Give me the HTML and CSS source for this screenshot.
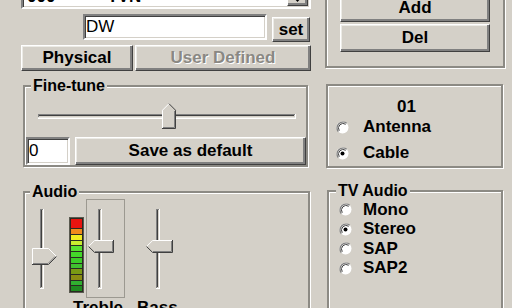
FILE: index.html
```html
<!DOCTYPE html>
<html>
<head>
<meta charset="utf-8">
<link rel="stylesheet" href="styles.css">
</head>
<body>
<div class="dialog">
  <div class="col-left">
    <div class="combo">
      <span class="combo-num">000</span><span class="combo-name">TVN</span>
      <span class="combo-btn"><svg width="9" height="5" viewBox="0 0 9 5"><path d="M0 0H9L4.5 5Z" fill="#000"/></svg></span>
    </div>
    <div class="edit-row">
      <div class="edit edit-name">DW</div>
      <div class="btn btn-set">set</div>
    </div>
    <div class="btn-row">
      <div class="btn btn-phys">Physical</div>
      <div class="btn btn-user disabled">User Defined</div>
    </div>
    <fieldset class="group group-fine">
      <legend class="legend-fine">Fine-tune</legend>
      <svg class="hslider" width="281" height="26" viewBox="0 0 281 26">
        <rect x="13" y="11" width="257" height="4" fill="#d4d0c8"/>
        <path d="M13 11.5H270" stroke="#808080"/>
        <path d="M13.5 11V15" stroke="#808080"/>
        <path d="M14 12.5H269" stroke="#404040"/>
        <path d="M13 14.5H270" stroke="#e8e6e0"/>
        <path d="M13 15.5H271M270.5 11V16" stroke="#fff"/>
        <path d="M137 7L144 0L151 7V25H137Z" fill="#d4d0c8"/>
        <path d="M137.5 25V7.2L144 0.7" stroke="#fff" fill="none"/>
        <path d="M144 0.7L150.5 7.2V25.5H137" stroke="#404040" fill="none"/>
        <path d="M149.5 8V24.5H138" stroke="#808080" fill="none"/>
      </svg>
      <div class="fine-row">
        <div class="edit edit-fine">0</div>
        <div class="btn btn-save">Save as default</div>
      </div>
    </fieldset>
    <fieldset class="group group-audio">
      <legend class="legend-audio">Audio</legend>
      <div class="audio-row">
        <svg class="vol" width="28" height="83" viewBox="0 0 28 83">
          <rect x="10" y="2" width="4" height="79" fill="#d4d0c8"/>
          <path d="M10.5 2V81M10 2.5H14" stroke="#808080"/>
          <path d="M11.5 3V80" stroke="#404040"/>
          <path d="M13.5 2V81M10 81.5H14" stroke="#fff"/>
          <path d="M2 41H18.5L27 49.5L18.5 58H2Z" fill="#d4d0c8"/>
          <path d="M2.5 58V41.5H18.5L26.5 49.5" stroke="#fff" fill="none"/>
          <path d="M26.5 49.5L18.5 57.5H2" stroke="#404040" fill="none"/>
          <path d="M25 49.5L18 56.5H3" stroke="#808080" fill="none"/>
        </svg>
        <div class="meter">
          <span class="seg tall" style="background:#e81410"></span>
          <span class="seg" style="background:#f08a1c"></span>
          <span class="seg" style="background:#f0ec20"></span>
          <span class="seg" style="background:#c8ec30"></span>
          <span class="seg" style="background:#58e030"></span>
          <span class="seg" style="background:#44d82a"></span>
          <span class="seg" style="background:#3ccc28"></span>
          <span class="seg" style="background:#40c030"></span>
          <span class="seg" style="background:#7a9a14"></span>
          <span class="seg" style="background:#8a8c12"></span>
          <span class="seg" style="background:#30b030"></span>
          <span class="seg" style="background:#1f8a20"></span>
        </div>
        <div class="focus">
          <svg width="37" height="97" viewBox="1 1 37 97">
            <rect x="12" y="10" width="4" height="79" fill="#d4d0c8"/>
            <path d="M12.5 10V89M12 10.5H16" stroke="#808080"/>
            <path d="M13.5 11V88" stroke="#404040"/>
            <path d="M15.5 10V89M12 89.5H16" stroke="#fff"/>
            <path d="M2 47.5L8.5 41H28V54H8.5Z" fill="#d4d0c8"/>
            <path d="M28 41.5H8.7L2.5 47.5" stroke="#fff" fill="none"/>
            <path d="M2.5 47.5L8.7 53.5H27.5V41" stroke="#404040" fill="none"/>
            <path d="M26.5 42V52.5H9" stroke="#808080" fill="none"/>
          </svg>
        </div>
        <svg class="bass" width="32" height="99" viewBox="0 0 32 99">
          <rect x="12" y="10" width="4" height="79" fill="#d4d0c8"/>
          <path d="M12.5 10V89M12 10.5H16" stroke="#808080"/>
          <path d="M13.5 11V88" stroke="#404040"/>
          <path d="M15.5 10V89M12 89.5H16" stroke="#fff"/>
          <path d="M2 47.5L8.5 41H29V54H8.5Z" fill="#d4d0c8"/>
          <path d="M29 41.5H8.7L2.5 47.5" stroke="#fff" fill="none"/>
          <path d="M2.5 47.5L8.7 53.5H28.5V41" stroke="#404040" fill="none"/>
          <path d="M27.5 42V52.5H9" stroke="#808080" fill="none"/>
        </svg>
      </div>
      <div class="audio-labels"><span class="lbl-treble">Treble</span><span class="lbl-bass">Bass</span></div>
    </fieldset>
  </div>
  <div class="col-right">
    <div class="group group-buttons">
      <div class="btn btn-add">Add</div>
      <div class="btn btn-del">Del</div>
    </div>
    <div class="group group-source">
      <div class="src-num">01</div>
      <div class="radio radio-src"><svg class="rb" width="13" height="13" viewBox="0 0 13 13"><circle cx="6.5" cy="6.5" r="6" fill="#fff"/><path d="M2.3 10.7A6 6 0 0 1 10.7 2.3" fill="none" stroke="#808080" stroke-width="1.4"/><path d="M3.3 9.7A4.6 4.6 0 0 1 9.7 3.3" fill="none" stroke="#404040" stroke-width="1"/></svg>Antenna</div>
      <div class="radio radio-src radio-gap"><svg class="rb" width="13" height="13" viewBox="0 0 13 13"><circle cx="6.5" cy="6.5" r="6" fill="#fff"/><path d="M2.3 10.7A6 6 0 0 1 10.7 2.3" fill="none" stroke="#808080" stroke-width="1.4"/><path d="M3.3 9.7A4.6 4.6 0 0 1 9.7 3.3" fill="none" stroke="#404040" stroke-width="1"/><circle cx="6.5" cy="6.5" r="2" fill="#000"/></svg>Cable</div>
    </div>
    <fieldset class="group group-tv">
      <legend class="legend-tv">TV Audio</legend>
      <div class="radio radio-tv"><svg class="rb" width="13" height="13" viewBox="0 0 13 13"><circle cx="6.5" cy="6.5" r="6" fill="#fff"/><path d="M2.3 10.7A6 6 0 0 1 10.7 2.3" fill="none" stroke="#808080" stroke-width="1.4"/><path d="M3.3 9.7A4.6 4.6 0 0 1 9.7 3.3" fill="none" stroke="#404040" stroke-width="1"/></svg>Mono</div>
      <div class="radio radio-tv"><svg class="rb" width="13" height="13" viewBox="0 0 13 13"><circle cx="6.5" cy="6.5" r="6" fill="#fff"/><path d="M2.3 10.7A6 6 0 0 1 10.7 2.3" fill="none" stroke="#808080" stroke-width="1.4"/><path d="M3.3 9.7A4.6 4.6 0 0 1 9.7 3.3" fill="none" stroke="#404040" stroke-width="1"/><circle cx="6.5" cy="6.5" r="2" fill="#000"/></svg>Stereo</div>
      <div class="radio radio-tv"><svg class="rb" width="13" height="13" viewBox="0 0 13 13"><circle cx="6.5" cy="6.5" r="6" fill="#fff"/><path d="M2.3 10.7A6 6 0 0 1 10.7 2.3" fill="none" stroke="#808080" stroke-width="1.4"/><path d="M3.3 9.7A4.6 4.6 0 0 1 9.7 3.3" fill="none" stroke="#404040" stroke-width="1"/></svg>SAP</div>
      <div class="radio radio-tv"><svg class="rb" width="13" height="13" viewBox="0 0 13 13"><circle cx="6.5" cy="6.5" r="6" fill="#fff"/><path d="M2.3 10.7A6 6 0 0 1 10.7 2.3" fill="none" stroke="#808080" stroke-width="1.4"/><path d="M3.3 9.7A4.6 4.6 0 0 1 9.7 3.3" fill="none" stroke="#404040" stroke-width="1"/></svg>SAP2</div>
    </fieldset>
  </div>
</div>
</body>
</html>
```
FILE: styles.css
```css
html, body {
  margin: 0;
  padding: 0;
  background: #d4d0c8;
  height: 308px;
  overflow: hidden;
}
body {
  font-family: "Liberation Sans", Arial, sans-serif;
  font-size: 17px;
  line-height: 20px;
  color: #000;
}
.dialog {
  display: flex;
  align-items: flex-start;
  padding-left: 21px;
  gap: 14px;
}
.col-left {
  width: 290px;
  display: flex;
  flex-direction: column;
  align-items: flex-start;
  margin-top: -15px;
}
.col-right {
  width: 180px;
  display: flex;
  flex-direction: column;
  align-items: flex-start;
  margin-top: -30px;
}

/* 3D controls */
.btn {
  box-sizing: border-box;
  display: flex;
  align-items: center;
  justify-content: center;
  background: #d4d0c8;
  border: 1px solid;
  border-color: #fff #404040 #404040 #fff;
  box-shadow: inset -2px -2px 0 #808080, inset 1px 1px 0 #ecebe6;
  font-weight: bold;
  font-size: 17px;
  white-space: nowrap;
}
.btn.disabled {
  color: #8a8883;
  text-shadow: 1px 1px 0 #fff;
}
.edit {
  box-sizing: border-box;
  background: #fff;
  border: 2px solid;
  border-color: #808080 #fff #fff #808080;
  box-shadow: inset 1px 1px 0 #404040, inset -1px -1px 0 #d4d0c8;
  display: flex;
  align-items: center;
  font-size: 17px;
  white-space: nowrap;
}

/* combo box */
.combo {
  box-sizing: border-box;
  width: 290px;
  height: 24px;
  background: #fff;
  border: 2px solid;
  border-color: #808080 #fff #fff #808080;
  box-shadow: inset 1px 1px 0 #404040, inset -1px -1px 0 #d4d0c8;
  display: flex;
  align-items: center;
  padding-left: 4px;
  font-weight: bold;
}
.combo-name {
  margin-left: 52px;
  flex: 1;
}
.combo-btn {
  box-sizing: border-box;
  align-self: stretch;
  width: 21px;
  margin: 1px 1px 1px 0;
  background: #d4d0c8;
  border: 1px solid;
  border-color: #fff #404040 #404040 #fff;
  box-shadow: inset -2px -2px 0 #808080;
  display: flex;
  align-items: flex-end;
  justify-content: center;
  padding-bottom: 3px;
}
.combo-btn svg { display: block; }

.edit-row {
  display: flex;
  align-items: flex-start;
  margin-top: 5px;
}
.edit-name {
  margin-left: 62px;
  width: 184px;
  height: 26px;
  padding-left: 1px;
}
.btn-set {
  margin-left: 5px;
  margin-top: 3px;
  width: 38px;
  height: 25px;
}
.btn-row {
  display: flex;
  gap: 2px;
  margin-top: 3px;
}
.btn-phys { width: 112px; height: 26px; }
.btn-user { width: 176px; height: 26px; }

/* group boxes */
.group {
  box-sizing: border-box;
  margin: 0;
  padding: 0;
  min-inline-size: 0;
  border: 2px solid #8c8a84;
  box-shadow: inset 1px 1px 0 #fff, 1px 1px 0 #fff;
}
.group legend {
  padding: 0 2px;
  font-size: 16px;
  line-height: 18px;
  font-weight: bold;
  background: #d4d0c8;
}
.legend-fine { margin-left: 6px; }
.legend-audio { margin-left: 5px; }
.legend-tv { margin-left: 7px; }

.group-fine {
  margin-top: 6px;
  margin-left: 2px;
  width: 285px;
}
.hslider {
  display: block;
  margin-top: 8px;
}
.fine-row {
  display: flex;
  margin-top: 8px;
}
.edit-fine {
  margin-left: 1px;
  width: 44px;
  height: 28px;
  padding-left: 1px;
}
.btn-save {
  margin-left: 5px;
  width: 231px;
  height: 28px;
}

.group-audio {
  margin-top: 16px;
  margin-left: 2px;
  width: 287px;
  height: 200px;
}
.audio-row {
  display: flex;
  align-items: flex-start;
  margin-top: -2px;
  height: 99px;
}
.audio-row svg { display: block; }
.vol {
  margin-left: 5px;
  margin-top: 8px;
}
.meter {
  box-sizing: border-box;
  margin-left: 11px;
  margin-top: 18px;
  width: 15px;
  height: 76px;
  background: #2a2a22;
  border: 1px solid #5a5a50;
  padding: 1px;
  display: flex;
  flex-direction: column;
  gap: 1px;
}
.seg {
  flex: 1;
  display: block;
}
.seg.tall { flex: 2; }
.focus {
  box-sizing: border-box;
  margin-left: 2px;
  width: 39px;
  height: 99px;
  border: 1px solid #9c9991;
}
.bass {
  margin-left: 19px;
}
.audio-labels {
  display: flex;
  font-weight: bold;
}
.lbl-treble { margin-left: 48px; }
.lbl-bass { margin-left: 14px; }

/* right column */
.group-buttons {
  width: 180px;
  padding: 22px 0 14px 13px;
  display: flex;
  flex-direction: column;
  gap: 2px;
}
.btn-add, .btn-del {
  width: 150px;
  height: 28px;
}
.group-source {
  margin-top: 16px;
  margin-left: 1px;
  width: 177px;
  padding: 11px 0 3px 0;
  font-weight: bold;
}
.src-num {
  padding-left: 69px;
  height: 20px;
}
.radio {
  display: flex;
  align-items: center;
  height: 20px;
  font-weight: bold;
  white-space: nowrap;
}
.rb { display: block; flex: none; }
.radio-src .rb {
  margin-left: 8px;
  margin-right: 14px;
}
.radio-gap { margin-top: 6px; }
.group-tv {
  margin-top: 14px;
  margin-left: 2px;
  width: 176px;
  height: 160px;
}
.radio-tv { height: 19.5px; }
.radio-tv .rb {
  margin-left: 10px;
  margin-right: 11px;
}
```
